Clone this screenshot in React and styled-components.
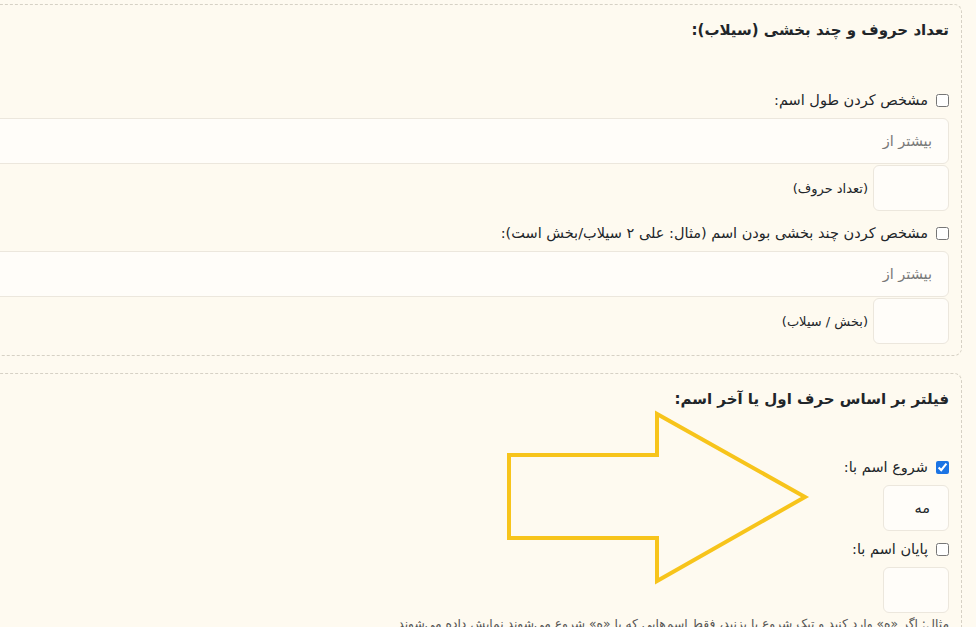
import React from 'react';
import styled, { createGlobalStyle } from 'styled-components';

const colors = {
  page: '#fefaf0',
  field: '#fffdf9',
  fieldBorder: '#ece7dd',
  dash: '#d6d1c5',
  text: '#212529',
  muted: '#7a7a7a',
  arrow: '#f7c41b',
};

const GlobalStyle = createGlobalStyle`
  html, body {
    margin: 0;
    padding: 0;
    background: ${colors.page};
    overflow: hidden;
  }
  body {
    font-family: "DejaVu Sans", "Noto Sans", sans-serif;
    color: ${colors.text};
  }
`;

const Page = styled.div`
  direction: rtl;
  position: relative;
  height: 627px;
  padding: 4px 14px 0 0;
  display: flex;
  flex-direction: column;
  align-items: flex-start;
  gap: 17px;
`;

const Card = styled.section`
  width: 1300px;
  flex-shrink: 0;
  border: 1px dashed ${colors.dash};
  border-radius: 8px;
  padding: 12px 12px 11px;
  box-sizing: border-box;
  display: flex;
  flex-direction: column;
  align-items: flex-start;
`;

const Title = styled.h3`
  margin: 0 0 ${p => p.$gap}px;
  font-size: 15px;
  font-weight: bold;
  line-height: 27px;
`;

const CheckRow = styled.label`
  display: flex;
  align-items: center;
  gap: 8px;
  height: 24px;
  margin: ${p => p.$top || 0}px 0 6px;
  font-size: 14.5px;
`;

const Check = styled.input`
  width: 13px;
  height: 13px;
  margin: 0;
  accent-color: #1b74e4;
`;

const WideField = styled.input`
  width: 100%;
  height: 46px;
  box-sizing: border-box;
  border: 1px solid ${colors.fieldBorder};
  border-radius: 6px;
  background: ${colors.field};
  padding: 0 16px;
  font-family: inherit;
  font-size: 14.5px;
  direction: rtl;
  &::placeholder {
    color: ${colors.muted};
  }
`;

const UnitRow = styled.div`
  display: flex;
  align-items: center;
  gap: 5px;
  margin-top: 1px;
`;

const SmallField = styled.input`
  width: ${p => p.$w}px;
  height: 46px;
  box-sizing: border-box;
  border: 1px solid ${colors.fieldBorder};
  border-radius: 6px;
  background: ${colors.field};
  padding: 0 18px;
  font-family: inherit;
  font-size: 14.5px;
  color: ${colors.text};
  direction: rtl;
`;

const Unit = styled.span`
  font-size: 13px;
  color: ${colors.text};
`;

const Hint = styled.p`
  margin: 1px 0 0;
  font-size: 12.3px;
  color: #555;
  line-height: 20px;
`;

const ArrowMark = styled.svg`
  position: absolute;
  left: 505px;
  top: 410px;
  overflow: visible;
  pointer-events: none;
`;

function Arrow() {
  return (
    <ArrowMark width="305" height="176" viewBox="505 410 305 176">
      <polygon
        points="509,455 657,455 657,414 805,497 657,581 657,538 509,538"
        fill="none"
        stroke={colors.arrow}
        strokeWidth="4"
        strokeLinejoin="miter"
      />
    </ArrowMark>
  );
}

export default function App() {
  return (
    <>
      <GlobalStyle />
      <Page>
        <Card>
          <Title $gap={44}>تعداد حروف و چند بخشی (سیلاب):</Title>
          <CheckRow>
            <Check type="checkbox" />
            مشخص کردن طول اسم:
          </CheckRow>
          <WideField placeholder="بیشتر از" />
          <UnitRow>
            <SmallField $w={76} />
            <Unit>(تعداد حروف)</Unit>
          </UnitRow>
          <CheckRow $top={10}>
            <Check type="checkbox" />
            مشخص کردن چند بخشی بودن اسم (مثال: علی ۲ سیلاب/بخش است):
          </CheckRow>
          <WideField placeholder="بیشتر از" />
          <UnitRow>
            <SmallField $w={76} />
            <Unit>(بخش / سیلاب)</Unit>
          </UnitRow>
        </Card>
        <Card>
          <Title $gap={42}>فیلتر بر اساس حرف اول یا آخر اسم:</Title>
          <CheckRow>
            <Check type="checkbox" defaultChecked />
            شروع اسم با:
          </CheckRow>
          <SmallField $w={66} defaultValue="مه" />
          <CheckRow $top={6}>
            <Check type="checkbox" />
            پایان اسم با:
          </CheckRow>
          <SmallField $w={66} />
          <Hint>
            مثال: اگر «ه» وارد کنید و تیک شروع با بزنید، فقط اسم‌هایی که با «ه» شروع می‌شوند نمایش داده می‌شوند
          </Hint>
        </Card>
        <Arrow />
      </Page>
    </>
  );
}
